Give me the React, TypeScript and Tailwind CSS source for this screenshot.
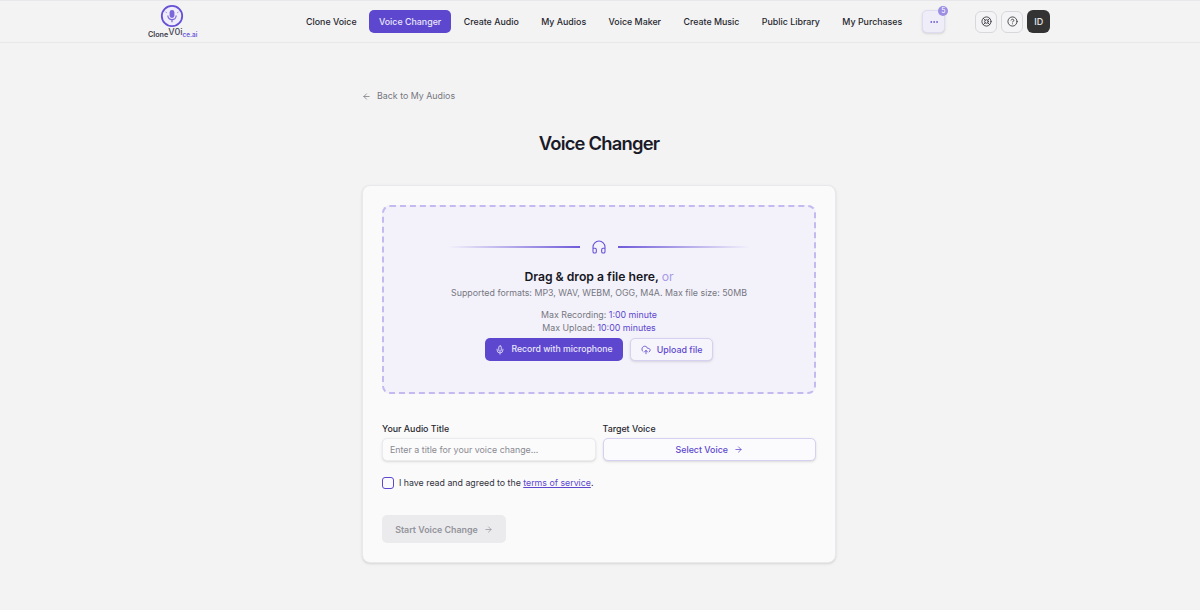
import React from 'react';
import { ArrowLeft, ArrowRight, CloudUpload, Ellipsis, Headphones, LifeBuoy, CircleHelp, Mic } from 'lucide-react';

const navItems = ['Clone Voice', 'Voice Changer', 'Create Audio', 'My Audios', 'Voice Maker', 'Create Music', 'Public Library', 'My Purchases'];

const Logo = () => (
  <div className="relative w-[49px] h-[40px] shrink-0">
    <svg className="absolute left-[12px] top-[2px]" width="24" height="24" viewBox="0 0 24 24" fill="none">
      <circle cx="12" cy="12" r="10.2" stroke="#6650d6" strokeWidth="1.8" fill="#efedfa" />
      <rect x="9.6" y="6" width="4.8" height="8" rx="2.4" fill="#7b66dc" />
      <path d="M7.8 11.5a4.2 4.2 0 0 0 8.4 0M12 15.7v2.6" stroke="#7b66dc" strokeWidth="1.2" />
      <path d="M5.5 8l1.5 1M18.5 8L17 9" stroke="#a79ae8" strokeWidth="1" />
    </svg>
    <div className="absolute left-0 top-[27px] text-[7.2px] leading-[10px] font-semibold whitespace-nowrap text-[#3a3a4a]">
      Clone<span className="relative -top-[2px] text-[9px] font-medium text-[#4a4a58]">V0i</span><span className="text-[6.4px] text-[#6f5bd9]">ce.ai</span>
    </div>
  </div>
);

export default function App() {
  return (
    <div className="min-h-screen bg-[#f3f3f4] font-['Inter',sans-serif] text-[#18181f] overflow-hidden">
      <header className="h-[43px] border-t border-b border-[#e8e8ea] flex items-center pl-[148px]">
        <Logo />
        <nav className="ml-[99px] flex items-center gap-[2.4px]">
          {navItems.map((item) => (
            <a
              key={item}
              className={
                item === 'Voice Changer'
                  ? 'h-[23px] px-[10px] flex items-center rounded-[5px] bg-[#5d47cf] text-[#e9e6fa] text-[8.85px] font-medium whitespace-nowrap'
                  : 'h-[23px] px-[10px] flex items-center text-[8.85px] font-medium text-[#27272e] whitespace-nowrap'
              }
            >
              {item}
            </a>
          ))}
        </nav>
        <button className="relative ml-[10px] w-[23px] h-[23px] rounded-[5px] bg-[#eeedf8] border border-[#dedcf0] shadow-sm flex items-center justify-center text-[#5d47cf]">
          <Ellipsis size={10} />
          <span className="absolute -top-[5px] -right-[4px] w-[10px] h-[10px] rounded-full bg-[#9c8fe3] text-white text-[7px] leading-[10px] text-center">5</span>
        </button>
        <button className="ml-[30px] w-[22px] h-[22px] rounded-[6px] bg-[#f4f4f6] border border-[#d8d8dc] flex items-center justify-center text-[#3f3f46]">
          <LifeBuoy size={11} />
        </button>
        <button className="ml-[4px] w-[22px] h-[22px] rounded-[6px] bg-[#f4f4f6] border border-[#d8d8dc] flex items-center justify-center text-[#3f3f46]">
          <CircleHelp size={11} />
        </button>
        <button className="ml-[4px] w-[23px] h-[23px] rounded-[6px] bg-[#333333] text-[#e8e8e8] text-[9px] font-medium flex items-center justify-center">ID</button>
      </header>

      <main className="w-[474px] ml-[362px]">
        <a className="mt-[47px] flex items-center gap-[6px] text-[8.85px] leading-[12px] text-[#77777f]">
          <ArrowLeft size={9} />
          Back to My Audios
        </a>
        <h1 className="mt-[27px] text-center text-[18.4px] leading-[28px] font-semibold tracking-[-0.8px] text-[#1a1a28]">Voice Changer</h1>

        <section className="mt-[28px] h-[378px] bg-[#fafafb] rounded-[8px] border border-[#e9e9eb] shadow-sm px-[19px] pt-[19px]">
          <div className="h-[189px] rounded-[8px] border-2 border-dashed border-[#c4baf0] bg-[#f3f2fb] flex flex-col items-center">
            <div className="mt-[32px] flex items-center gap-[11px]">
              <div className="w-[132px] h-[2px] bg-gradient-to-r from-transparent to-[#6f5bd9]" />
              <Headphones size={16} className="text-[#6650d6]" strokeWidth={1.6} />
              <div className="w-[132px] h-[2px] bg-gradient-to-l from-transparent to-[#6f5bd9]" />
            </div>
            <p className="mt-[14px] text-[12.2px] leading-[16px] font-semibold text-[#17171f]">
              Drag &amp; drop a file here, <span className="font-normal text-[#a79ae8]">or</span>
            </p>
            <p className="mt-[2px] text-[8.85px] leading-[12px] text-[#77777f]">Supported formats: MP3, WAV, WEBM, OGG, M4A. Max file size: 50MB</p>
            <p className="mt-[10px] text-[8.85px] leading-[12px] text-[#77777f]">
              Max Recording: <span className="text-[#5d47cf]">1:00 minute</span>
            </p>
            <p className="mt-[1px] text-[8.85px] leading-[12px] text-[#77777f]">
              Max Upload: <span className="text-[#5d47cf]">10:00 minutes</span>
            </p>
            <div className="mt-[4px] flex items-center gap-[7px]">
              <button className="h-[23px] w-[138px] rounded-[5px] bg-[#5d47cf] text-[#e9e6fa] text-[8.7px] font-medium flex items-center justify-center gap-[6px]">
                <Mic size={10} />
                Record with microphone
              </button>
              <button className="h-[23px] w-[83px] rounded-[5px] bg-[#f6f5fc] border border-[#d6d1f1] shadow-sm text-[#5d47cf] text-[8.9px] font-medium flex items-center justify-center gap-[6px]">
                <CloudUpload size={10} />
                Upload file
              </button>
            </div>
          </div>

          <div className="mt-[29px] grid grid-cols-2 gap-[7px]">
            <div>
              <label className="block text-[8.85px] leading-[12px] font-medium text-[#27272e]">Your Audio Title</label>
              <div className="mt-[3px] h-[23px] rounded-[5px] bg-[#fbfbfc] border border-[#ebebed] shadow-sm px-[7px] flex items-center text-[8.85px] text-[#8a8a92]">
                Enter a title for your voice change...
              </div>
            </div>
            <div>
              <label className="block text-[8.85px] leading-[12px] font-medium text-[#27272e]">Target Voice</label>
              <button className="mt-[3px] w-full h-[23px] rounded-[5px] bg-[#fbfbfe] border border-[#d6d1f1] shadow-sm text-[#5d47cf] text-[8.85px] font-medium flex items-center justify-center gap-[6px]">
                Select Voice
                <ArrowRight size={9} />
              </button>
            </div>
          </div>

          <label className="mt-[15px] flex items-center gap-[5px] text-[8.8px] text-[#33333b]">
            <span className="w-[12px] h-[12px] rounded-[3px] border border-[#5d47cf] bg-[#fbfbfe]" />
            <span>
              I have read and agreed to the <a className="text-[#5d47cf] underline">terms of service</a>.
            </span>
          </label>

          <button className="mt-[26px] w-[124px] h-[28px] rounded-[5px] bg-[#ebebed] text-[#94949c] text-[8.9px] font-semibold flex items-center justify-center gap-[6px]">
            Start Voice Change
            <ArrowRight size={9} />
          </button>
        </section>
      </main>
    </div>
  );
}
